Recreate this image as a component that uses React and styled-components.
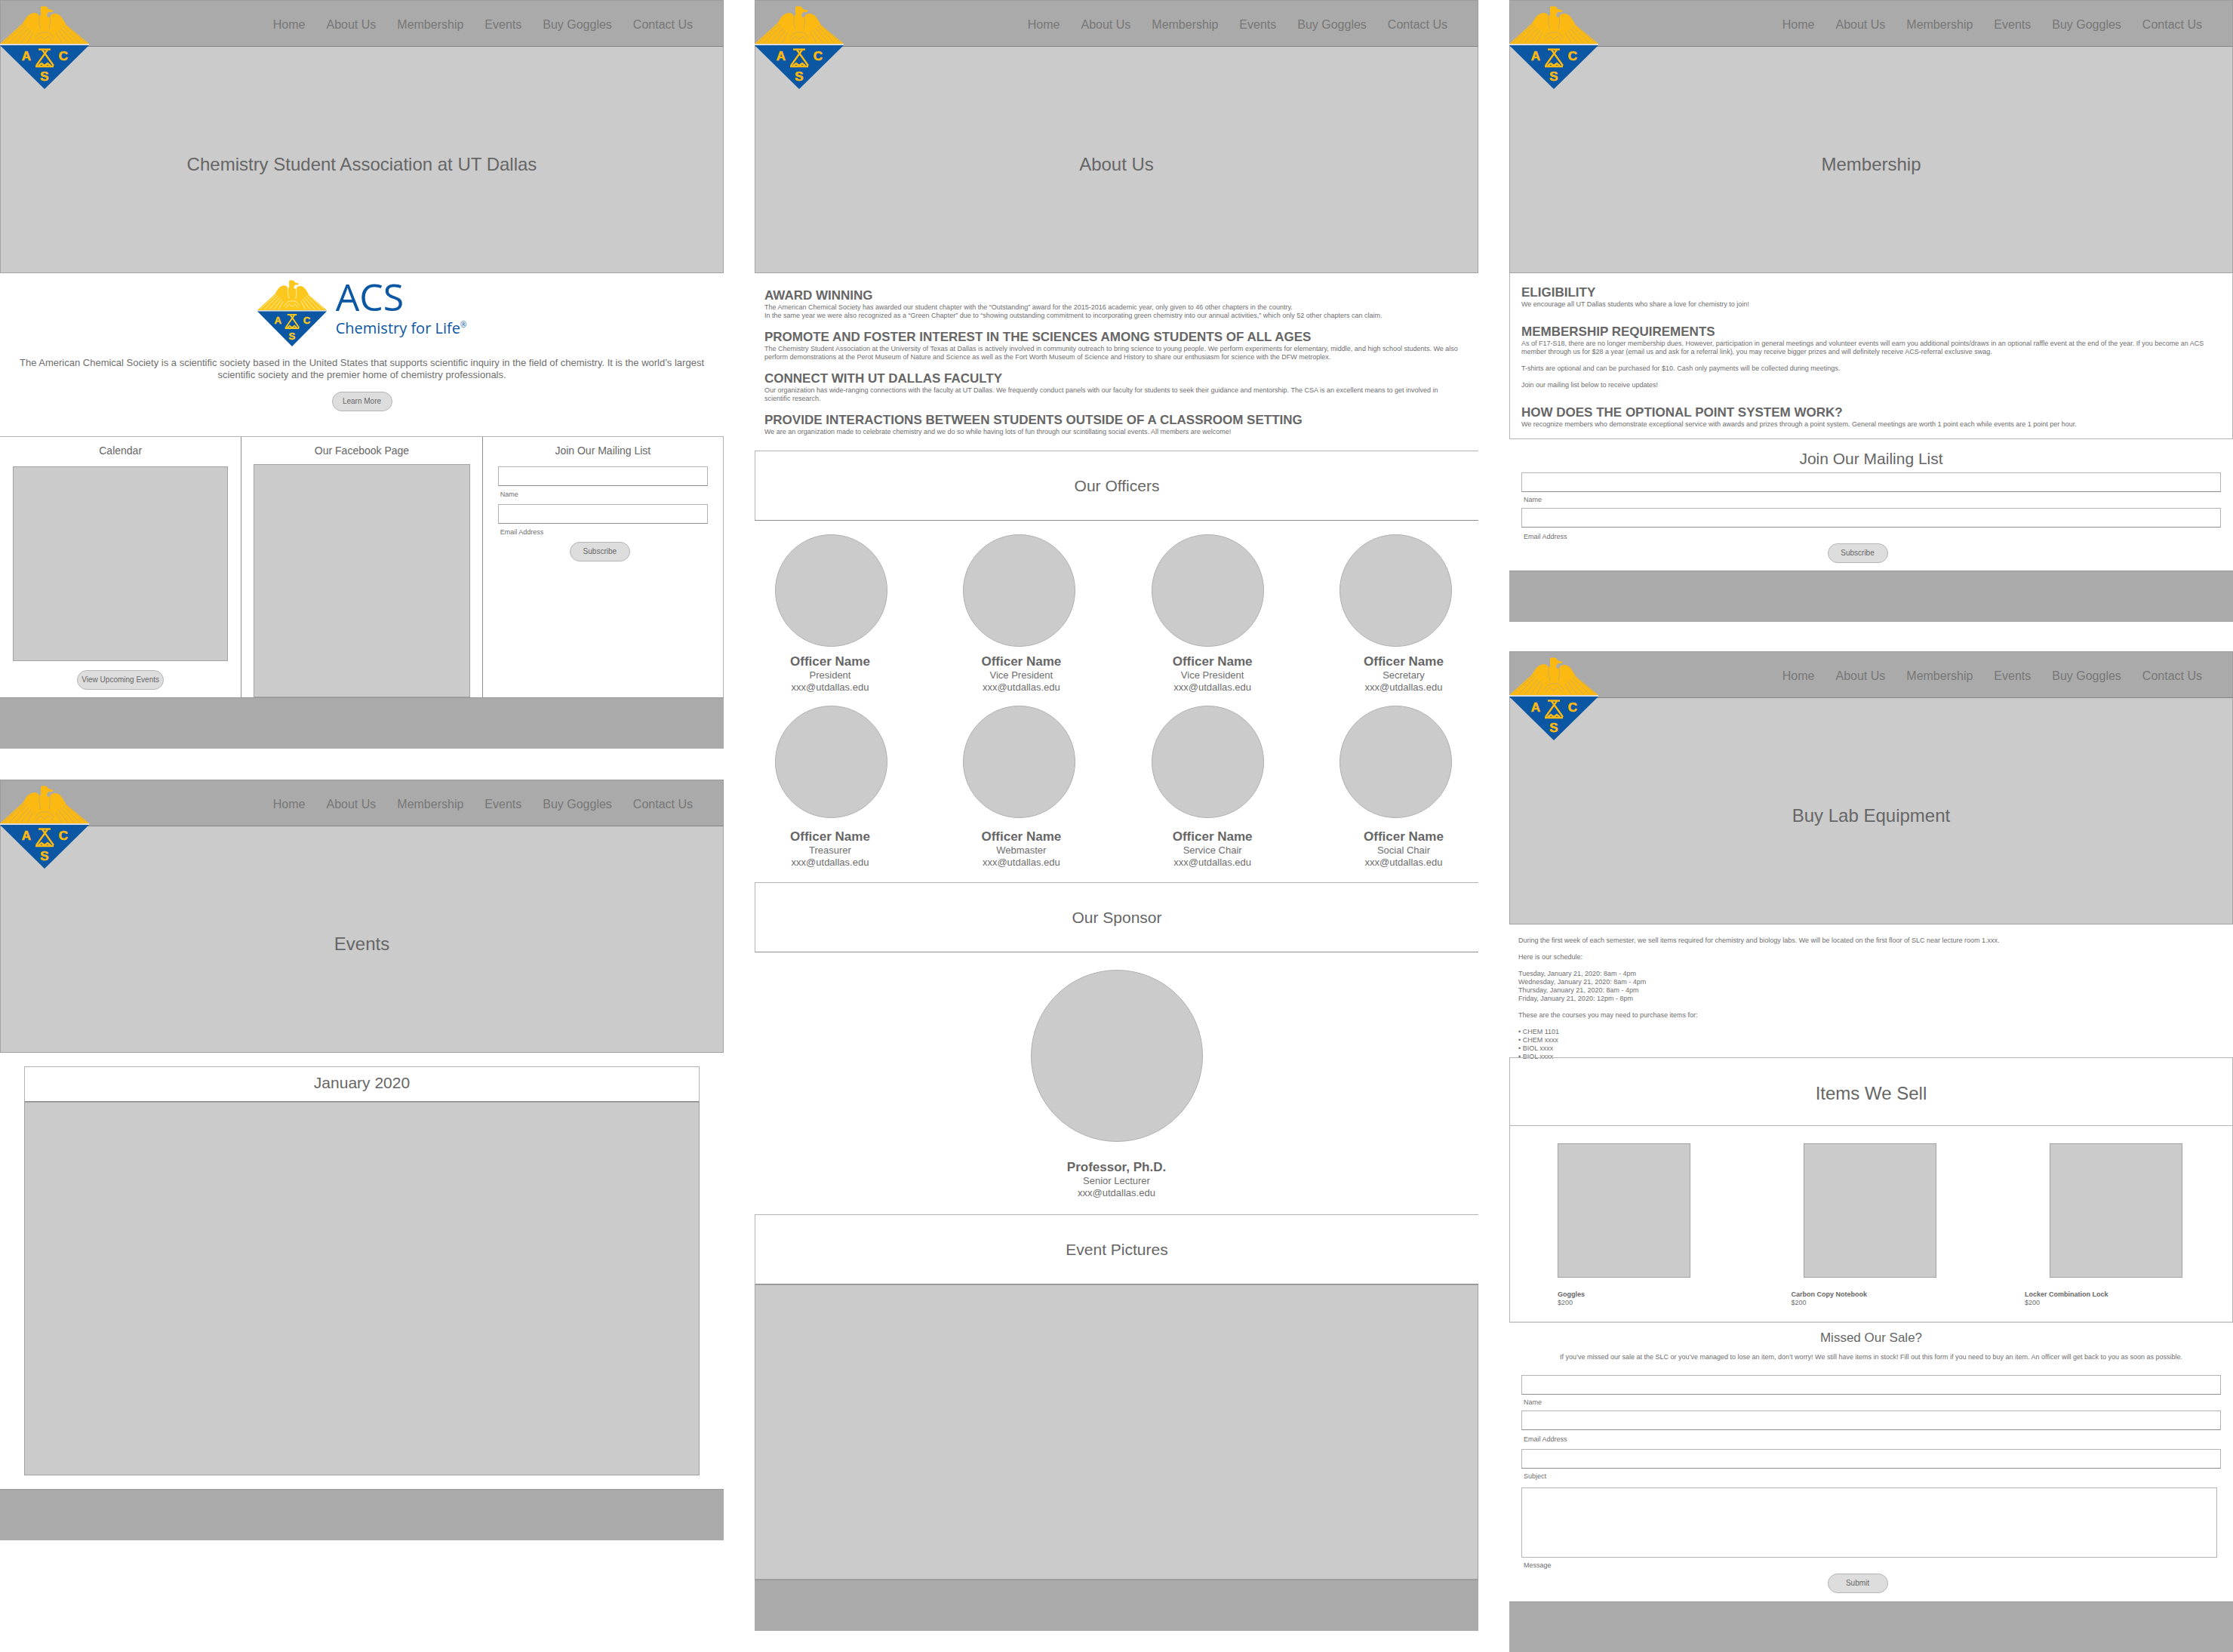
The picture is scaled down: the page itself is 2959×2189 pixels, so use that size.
import React from "react";
import styled, { createGlobalStyle } from "styled-components";

const ink = "#666";
const softInk = "#6e6e6e";
const line = "#b4b4b4";
const lineDark = "#8e8e8e";
const fill = "#cbcbcb";
const bar = "#aaa";
const blue = "#0b57a4";
const gold = "#fcb912";

const GlobalStyle = createGlobalStyle`
  *, *::before, *::after { box-sizing: border-box; }
  body {
    margin: 0;
    background: #fff;
    color: ${ink};
    font-family: "Liberation Sans", Arial, Helvetica, sans-serif;
    font-size: 9px;
    line-height: 11px;
  }
  h1, h2, h3, p, ul { margin: 0; padding: 0; font-weight: 400; }
  p, ul, label { color: ${softInk}; }
  ul { list-style: none; }
  a { color: inherit; text-decoration: none; }
`;

const Boards = styled.div`
  display: grid;
  grid-template-columns: repeat(3, minmax(0, 1fr));
  column-gap: 41px;
  align-items: start;
`;

const BoardColumn = styled.div`
  display: flex;
  flex-direction: column;
  gap: ${(p) => p.$gap}px;
`;

const Board = styled.article`
  position: relative;
  display: flex;
  flex-direction: column;
`;

const NavBar = styled.nav`
  height: 62px;
  padding: 3px 40px 0 140px;
  display: flex;
  align-items: center;
  justify-content: flex-end;
  gap: 28px;
  background: ${bar};
  border: 1px solid #9c9c9c;
  border-bottom-color: #848484;
  font-size: 16px;
  line-height: 20px;
  color: #777;
`;

const HomeMark = styled.a`
  position: absolute;
  top: 8px;
  left: 0;
  display: block;
  width: 118px;
  height: 110px;
`;

const Hero = styled.header`
  height: 300px;
  padding-top: 12px;
  display: flex;
  align-items: center;
  justify-content: center;
  background: ${fill};
  border: 1px solid #a2a2a2;
  border-top: 0;
`;

const HeroTitle = styled.h1`
  font-size: 24px;
  line-height: 28px;
`;

const Footer = styled.footer`
  height: 68px;
  background: ${bar};
  border-top: 1px solid #989898;
`;

const PillButton = styled.button`
  min-width: 80px;
  height: 26px;
  padding: 0 5px;
  border: 1px solid #b5b5b5;
  border-radius: 13px;
  background: #ddd;
  color: ${ink};
  font-family: inherit;
  font-size: 10px;
  line-height: 12px;
`;

const Placeholder = styled.div`
  height: ${(p) => p.$height}px;
  background: ${fill};
  border: 1px solid #a2a2a2;
`;

/* Home */
const Intro = styled.section`
  padding: 9px 16px 33px;
  display: flex;
  flex-direction: column;
  align-items: center;
  gap: 14px;
`;

const Brand = styled.div`
  display: flex;
  align-items: flex-start;
  gap: 12px;
  height: 88px;
  color: ${blue};
  font-family: "Open Sans", "Noto Sans", sans-serif;
  svg { width: 92px; height: 88px; }
`;

const BrandName = styled.div`
  font-size: 50px;
  line-height: 44px;
`;

const BrandTag = styled.div`
  font-size: 20px;
  line-height: 40px;
  white-space: nowrap;
  sup { font-size: 10px; line-height: 10px; }
`;

const IntroText = styled.p`
  font-size: 13px;
  line-height: 16px;
  text-align: center;
`;

const Panels = styled.div`
  display: grid;
  grid-template-columns: repeat(3, 1fr);
  border-top: 1px solid ${line};
  border-right: 1px solid ${line};
`;

const Panel = styled.section`
  padding: 8px ${(p) => p.$side}px ${(p) => p.$bottom}px;
  display: flex;
  flex-direction: column;
  & + & { border-left: 1px solid ${lineDark}; }
`;

const PanelTitle = styled.h2`
  margin-bottom: ${(p) => p.$gap}px;
  font-size: 14px;
  line-height: 20px;
  text-align: center;
`;

const PanelAction = styled.div`
  margin-top: 12px;
  display: flex;
  justify-content: center;
`;

/* Forms */
const FormBody = styled.form`
  display: flex;
  flex-direction: column;
`;

const FieldBox = styled.div`
  display: flex;
  flex-direction: column;
`;

const TextBox = styled.input`
  width: 100%;
  height: 26px;
  padding: 0 6px;
  border: 1px solid ${line};
  border-bottom-color: ${lineDark};
  border-radius: 0;
  background: #fff;
  color: ${ink};
  font: inherit;
`;

const MessageBox = styled.textarea`
  height: 93px;
  margin-right: 5px;
  padding: 6px;
  border: 1px solid ${line};
  border-radius: 0;
  background: #fff;
  color: ${ink};
  font: inherit;
  resize: none;
`;

const FieldLabel = styled.label`
  padding: ${(p) => p.$above}px 3px ${(p) => p.$below}px;
`;

const FormAction = styled.div`
  display: flex;
  justify-content: center;
  padding-right: ${(p) => p.$inset}px;
`;

/* Text sections */
const Copy = styled.section`
  padding: ${(p) => p.$pad};
  display: flex;
  flex-direction: column;
  gap: ${(p) => p.$gap}px;
  border: 0 solid ${line};
  border-width: ${(p) => (p.$framed ? "0 1px 1px" : "0")};
`;

const CopyTitle = styled.h2`
  font-size: 17px;
  line-height: 20px;
  font-weight: 700;
`;

const Paragraph = styled.p`
  white-space: pre-line;
`;

const Banner = styled.div`
  height: 93px;
  display: flex;
  align-items: center;
  justify-content: center;
  border: 1px solid ${line};
  border-right: 0;
  border-bottom-color: ${lineDark};
`;

const BannerTitle = styled.h2`
  font-size: ${(p) => (p.$large ? 24 : 21)}px;
  line-height: 28px;
`;

/* Officers */
const People = styled.section`
  padding: 18px 0;
`;

const PortraitRow = styled.div`
  padding: 0 35px 0 27px;
  display: flex;
  justify-content: space-between;
`;

const CaptionRow = styled.div`
  margin-top: ${(p) => p.$gap}px;
  padding: 0 39px 0 40px;
  display: flex;
  justify-content: space-between;
  & + ${PortraitRow} { margin-top: 16px; }
`;

const Portrait = styled.div`
  width: ${(p) => p.$size}px;
  height: ${(p) => p.$size}px;
  border: 1px solid #b0b0b0;
  border-radius: 50%;
  background: ${fill};
`;

const Caption = styled.div`
  min-width: 120px;
  font-size: 13px;
  line-height: 16px;
  text-align: center;
`;

const PersonName = styled.h3`
  font-size: 17px;
  line-height: 20px;
  font-weight: 700;
`;

const SponsorCard = styled.section`
  padding: 23px 0 20px;
  display: flex;
  flex-direction: column;
  align-items: center;
  gap: 24px;
`;

/* Events */
const CalendarCard = styled.section`
  margin: 18px 32px;
`;

const CalendarHead = styled.div`
  height: 47px;
  padding-bottom: 3px;
  display: flex;
  align-items: center;
  justify-content: center;
  border: 1px solid ${line};
  border-bottom-color: ${lineDark};
`;

/* Mailing list and shop */
const MailingSection = styled.section`
  padding: 12px 16px 10px;
`;

const MailingTitle = styled.h2`
  margin-bottom: 4px;
  font-size: 21px;
  line-height: 28px;
  text-align: center;
`;

const ShopNotes = styled.section`
  padding: 16px 12px 0;
  display: flex;
  flex-direction: column;
  gap: 11px;
`;

const Shop = styled.section`
  margin-top: -5px;
  border: 1px solid ${line};
  border-bottom: 2px solid #cfcfcf;
`;

const ShopHead = styled.div`
  height: 90px;
  padding-top: 4px;
  display: flex;
  align-items: center;
  justify-content: center;
  border-bottom: 1px solid ${line};
`;

const ProductPictures = styled.div`
  padding: 23px 66px 0 63px;
  display: flex;
  justify-content: space-between;
`;

const ProductPicture = styled(Placeholder)`
  width: 176px;
`;

const ProductNames = styled.div`
  padding: 17px 0 19px 63px;
  display: grid;
  grid-template-columns: 1fr 1fr 275px;
`;

const ProductName = styled.h3`
  font-size: 9px;
  line-height: 11px;
  font-weight: 700;
`;

const MissedSection = styled.section`
  padding: 9px 16px 11px;
`;

const MissedTitle = styled.h2`
  font-size: 17px;
  line-height: 22px;
  text-align: center;
`;

const MissedText = styled.p`
  margin: 9px 0 18px;
  text-align: center;
`;

const MarkLetter = styled.text`
  font-family: "Liberation Sans", Arial, sans-serif;
  font-weight: 700;
  font-size: 17px;
  text-anchor: middle;
`;

function Emblem({ feather, yellow = gold }) {
  return (
    <svg width="118" height="110" viewBox="0 0 118 110" preserveAspectRatio="none" aria-hidden="true">
      <path
        fill={yellow}
        d="M54 1 Q57 -0.500 62 1 L64 4 L71 6 L69 8 L64 8 L62 12 Q62 15 66 15 Q67 10 73 10 Q79 10 83 17 L88 25 L118 50 H0 L30 23 L35 15 Q39 10 45 9 Q51 9 52 14 Q55 12 54 8 Z"
      />
      <g fill="none" stroke={feather} strokeWidth="1">
        <path d="M52 14 Q51 22 54 31 M66 15 Q68 22 65 31" />
        <path d="M32 24 L5 48 M35 26 L12 49 M38 29 L20 49 M41 32 L28 49 M44 35 L36 49" />
        <path d="M86 24 L113 48 M83 26 L106 49 M80 29 L98 49 M77 32 L90 49 M74 35 L82 49" />
        <path d="M46 43 Q52 33 59 35 Q66 33 72 43 M48 46 L54 40 L59 44 L64 40 L70 46" />
      </g>
      <path fill="#dcdcdc" d="M0 50 H118 V52 H0 Z" />
      <path fill={blue} d="M0 52 H118 L59 110 Z" />
      <g fill="none" stroke={yellow} strokeWidth="2.400">
        <path d="M51 57.500 H67" />
        <path d="M56 58 L71 79 M63 58 L48 79" />
        <path d="M47 80 H71 M51 79 L55 76 L59 79 L63 76 L67 79" />
      </g>
      <g fill={yellow} stroke={yellow} strokeWidth="0.600">
        <MarkLetter x="35" y="72">A</MarkLetter>
        <MarkLetter x="84" y="72">C</MarkLetter>
        <MarkLetter x="59" y="99">S</MarkLetter>
      </g>
    </svg>
  );
}

const links = ["Home", "About Us", "Membership", "Events", "Buy Goggles", "Contact Us"];

function Page({ title, children }) {
  return (
    <Board>
      <NavBar>
        {links.map((text) => (
          <a key={text} href="#">{text}</a>
        ))}
      </NavBar>
      <Hero>
        <HeroTitle>{title}</HeroTitle>
      </Hero>
      {children}
      <Footer />
      <HomeMark href="#" aria-label="Home">
        <Emblem feather="#cfae55" />
      </HomeMark>
    </Board>
  );
}

function Field({ id, label, above = 5, below = 5, multiline }) {
  return (
    <FieldBox>
      {multiline ? <MessageBox id={id} /> : <TextBox id={id} type="text" />}
      <FieldLabel htmlFor={id} $above={above} $below={below}>{label}</FieldLabel>
    </FieldBox>
  );
}

function HomePage() {
  return (
    <Page title="Chemistry Student Association at UT Dallas">
      <Intro>
        <Brand>
          <Emblem feather="#fff3c4" yellow="#fcc81e" />
          <div>
            <BrandName>ACS</BrandName>
            <BrandTag>Chemistry for Life<sup>®</sup></BrandTag>
          </div>
        </Brand>
        <IntroText>
          The American Chemical Society is a scientific society based in the United States that supports
          scientific inquiry in the field of chemistry. It is the world’s largest scientific society and
          the premier home of chemistry professionals.
        </IntroText>
        <PillButton type="button">Learn More</PillButton>
      </Intro>
      <Panels>
        <Panel $side={17} $bottom={10}>
          <PanelTitle $gap={11}>Calendar</PanelTitle>
          <Placeholder $height={258} />
          <PanelAction>
            <PillButton type="button">View Upcoming Events</PillButton>
          </PanelAction>
        </Panel>
        <Panel $side={16} $bottom={0}>
          <PanelTitle $gap={8}>Our Facebook Page</PanelTitle>
          <Placeholder $height={309} />
        </Panel>
        <Panel $side={20} $bottom={10}>
          <PanelTitle $gap={11}>Join Our Mailing List</PanelTitle>
          <FormBody>
            <Field id="home-name" label="Name" above={6} below={7} />
            <Field id="home-email" label="Email Address" above={6} below={7} />
            <FormAction $inset={8}>
              <PillButton type="button">Subscribe</PillButton>
            </FormAction>
          </FormBody>
        </Panel>
      </Panels>
    </Page>
  );
}

function EventsPage() {
  return (
    <Page title="Events">
      <CalendarCard>
        <CalendarHead>
          <BannerTitle>January 2020</BannerTitle>
        </CalendarHead>
        <Placeholder $height={495} />
      </CalendarCard>
    </Page>
  );
}

const reasons = [
  ["AWARD WINNING", "The American Chemical Society has awarded our student chapter with the “Outstanding” award for the 2015-2016 academic year, only given to 46 other chapters in the country.\nIn the same year we were also recognized as a “Green Chapter” due to “showing outstanding commitment to incorporating green chemistry into our annual activities,” which only 52 other chapters can claim."],
  ["PROMOTE AND FOSTER INTEREST IN THE SCIENCES AMONG STUDENTS OF ALL AGES", "The Chemistry Student Association at the University of Texas at Dallas is actively involved in community outreach to bring science to young people. We perform experiments for elementary, middle, and high school students. We also perform demonstrations at the Perot Museum of Nature and Science as well as the Fort Worth Museum of Science and History to share our enthusiasm for science with the DFW metroplex."],
  ["CONNECT WITH UT DALLAS FACULTY", "Our organization has wide-ranging connections with the faculty at UT Dallas. We frequently conduct panels with our faculty for students to seek their guidance and mentorship. The CSA is an excellent means to get involved in scientific research."],
  ["PROVIDE INTERACTIONS BETWEEN STUDENTS OUTSIDE OF A CLASSROOM SETTING", "We are an organization made to celebrate chemistry and we do so while having lots of fun through our scintillating social events. All members are welcome!"],
];

const officerRows = [
  { gap: 10, roles: ["President", "Vice President", "Vice President", "Secretary"] },
  { gap: 15, roles: ["Treasurer", "Webmaster", "Service Chair", "Social Chair"] },
];

function Person({ name, role }) {
  return (
    <Caption>
      <PersonName>{name}</PersonName>
      <p>{role}</p>
      <p>xxx@utdallas.edu</p>
    </Caption>
  );
}

function CopyItems({ items }) {
  return items.map(([title, text]) => (
    <div key={title}>
      <CopyTitle>{title}</CopyTitle>
      <Paragraph>{text}</Paragraph>
    </div>
  ));
}

function AboutPage() {
  return (
    <Page title="About Us">
      <Copy $pad="20px 18px 19px 13px" $gap={13}>
        <CopyItems items={reasons} />
      </Copy>
      <Banner>
        <BannerTitle>Our Officers</BannerTitle>
      </Banner>
      <People>
        {officerRows.map(({ gap, roles }, row) => (
          <React.Fragment key={row}>
            <PortraitRow>
              {roles.map((role, i) => <Portrait key={i} $size={149} />)}
            </PortraitRow>
            <CaptionRow $gap={gap}>
              {roles.map((role, i) => <Person key={i} name="Officer Name" role={role} />)}
            </CaptionRow>
          </React.Fragment>
        ))}
      </People>
      <Banner>
        <BannerTitle>Our Sponsor</BannerTitle>
      </Banner>
      <SponsorCard>
        <Portrait $size={228} />
        <Person name="Professor, Ph.D." role="Senior Lecturer" />
      </SponsorCard>
      <Banner>
        <BannerTitle>Event Pictures</BannerTitle>
      </Banner>
      <Placeholder $height={391} />
    </Page>
  );
}

const rules = [
  ["ELIGIBILITY", "We encourage all UT Dallas students who share a love for chemistry to join!"],
  ["MEMBERSHIP REQUIREMENTS", "As of F17-S18, there are no longer membership dues. However, participation in general meetings and volunteer events will earn you additional points/draws in an optional raffle event at the end of the year. If you become an ACS member through us for $28 a year (email us and ask for a referral link), you may receive bigger prizes and will definitely receive ACS-referral exclusive swag.\n\nT-shirts are optional and can be purchased for $10. Cash only payments will be collected during meetings.\n\nJoin our mailing list below to receive updates!"],
  ["HOW DOES THE OPTIONAL POINT SYSTEM WORK?", "We recognize members who demonstrate exceptional service with awards and prizes through a point system. General meetings are worth 1 point each while events are 1 point per hour."],
];

function MembershipPage() {
  return (
    <Page title="Membership">
      <Copy $pad="16px 15px 13px" $gap={21} $framed>
        <CopyItems items={rules} />
      </Copy>
      <MailingSection>
        <MailingTitle>Join Our Mailing List</MailingTitle>
        <FormBody>
          <Field id="member-name" label="Name" />
          <Field id="member-email" label="Email Address" above={7} below={3} />
          <FormAction $inset={36}>
            <PillButton type="button">Subscribe</PillButton>
          </FormAction>
        </FormBody>
      </MailingSection>
    </Page>
  );
}

const days = [
  "Tuesday, January 21, 2020: 8am - 4pm",
  "Wednesday, January 21, 2020: 8am - 4pm",
  "Thursday, January 21, 2020: 8am - 4pm",
  "Friday, January 21, 2020: 12pm - 8pm",
];
const courses = ["CHEM 1101", "CHEM xxxx", "BIOL xxxx", "BIOL xxxx"];
const products = ["Goggles", "Carbon Copy Notebook", "Locker Combination Lock"];

function ShopPage() {
  return (
    <Page title="Buy Lab Equipment">
      <ShopNotes>
        <p>During the first week of each semester, we sell items required for chemistry and biology labs. We will be located on the first floor of SLC near lecture room 1.xxx.</p>
        <p>Here is our schedule:</p>
        <ul>{days.map((day) => <li key={day}>{day}</li>)}</ul>
        <p>These are the courses you may need to purchase items for:</p>
        <ul>{courses.map((course, i) => <li key={i}>• {course}</li>)}</ul>
      </ShopNotes>
      <Shop>
        <ShopHead>
          <BannerTitle $large>Items We Sell</BannerTitle>
        </ShopHead>
        <ProductPictures>
          {products.map((name) => <ProductPicture key={name} $height={178} />)}
        </ProductPictures>
        <ProductNames>
          {products.map((name) => (
            <div key={name}>
              <ProductName>{name}</ProductName>
              <p>$200</p>
            </div>
          ))}
        </ProductNames>
      </Shop>
      <MissedSection>
        <MissedTitle>Missed Our Sale?</MissedTitle>
        <MissedText>If you’ve missed our sale at the SLC or you’ve managed to lose an item, don’t worry! We still have items in stock! Fill out this form if you need to buy an item. An officer will get back to you as soon as possible.</MissedText>
        <FormBody>
          <Field id="shop-name" label="Name" />
          <Field id="shop-email" label="Email Address" above={7} below={7} />
          <Field id="shop-subject" label="Subject" above={5} below={9} />
          <Field id="shop-message" label="Message" multiline />
          <FormAction $inset={36}>
            <PillButton type="button">Submit</PillButton>
          </FormAction>
        </FormBody>
      </MissedSection>
    </Page>
  );
}

export default function App() {
  return (
    <>
      <GlobalStyle />
      <Boards>
        <BoardColumn $gap={41}>
          <HomePage />
          <EventsPage />
        </BoardColumn>
        <BoardColumn $gap={41}>
          <AboutPage />
        </BoardColumn>
        <BoardColumn $gap={39}>
          <MembershipPage />
          <ShopPage />
        </BoardColumn>
      </Boards>
    </>
  );
}
